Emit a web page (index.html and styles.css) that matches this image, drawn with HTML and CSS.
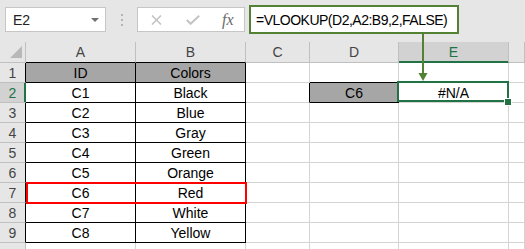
FILE: index.html
```html
<!DOCTYPE html>
<html lang="en">
  <head>
    <meta charset="UTF-8" />
    <title>VLOOKUP #N/A</title>
    <link rel="stylesheet" href="styles.css">
  </head>
  <body>
    <div class="toolbar">
      <div class="namebox"><span>E2</span><span class="caret"></span></div>
      <div class="grip"><i></i><i></i><i></i></div>
      <div class="fxbox">
        <svg class="ico-x" width="11" height="10" viewBox="0 0 11 10"><path d="M1 0.5 L10 9.5 M10 0.5 L1 9.5" stroke="#c3c3c3" stroke-width="1.6" fill="none"/></svg>
        <svg class="ico-ok" width="14" height="10" viewBox="0 0 14 10"><path d="M0.8 5 L4.6 8.8 L13.2 0.8" stroke="#c3c3c3" stroke-width="2" fill="none"/></svg>
        <span class="fx">fx</span>
      </div>
      <div class="formula">=VLOOKUP(D2,A2:B9,2,FALSE)</div>
    </div>

    <div class="sheet">
      <div class="c corner"><span class="tri"></span></div>
      <div class="c ch tbot">A</div>
      <div class="c ch tbot">B</div>
      <div class="c ch">C</div>
      <div class="c ch">D</div>
      <div class="c ch on">E</div>
      <div class="c ch"></div>

      <div class="c rh tl">1</div>
      <div class="c t th">ID</div>
      <div class="c t th">Colors</div>
      <div class="c"></div>
      <div class="c tbot"></div>
      <div class="c"></div>
      <div class="c"></div>

      <div class="c rh on">2</div>
      <div class="c t">C1</div>
      <div class="c t">Black</div>
      <div class="c tright"></div>
      <div class="c t th">C6</div>
      <div class="c sel">#N/A<span class="handle"></span></div>
      <div class="c"></div>

      <div class="c rh tl">3</div>
      <div class="c t">C2</div>
      <div class="c t">Blue</div>
      <div class="c"></div>
      <div class="c"></div>
      <div class="c"></div>
      <div class="c"></div>

      <div class="c rh tl">4</div>
      <div class="c t">C3</div>
      <div class="c t">Gray</div>
      <div class="c"></div>
      <div class="c"></div>
      <div class="c"></div>
      <div class="c"></div>

      <div class="c rh tl">5</div>
      <div class="c t">C4</div>
      <div class="c t">Green</div>
      <div class="c"></div>
      <div class="c"></div>
      <div class="c"></div>
      <div class="c"></div>

      <div class="c rh tl">6</div>
      <div class="c t">C5</div>
      <div class="c t">Orange</div>
      <div class="c"></div>
      <div class="c"></div>
      <div class="c"></div>
      <div class="c"></div>

      <div class="c rh tl">7</div>
      <div class="c t">C6</div>
      <div class="c t">Red</div>
      <div class="c"></div>
      <div class="c"></div>
      <div class="c"></div>
      <div class="c"></div>

      <div class="c rh tl">8</div>
      <div class="c t">C7</div>
      <div class="c t">White</div>
      <div class="c"></div>
      <div class="c"></div>
      <div class="c"></div>
      <div class="c"></div>

      <div class="c rh tl">9</div>
      <div class="c t">C8</div>
      <div class="c t">Yellow</div>
      <div class="c"></div>
      <div class="c"></div>
      <div class="c"></div>
      <div class="c"></div>

      <!-- row 10, only its top edge is in view -->
      <div class="c rh"></div>
      <div class="c"></div>
      <div class="c"></div>
      <div class="c"></div>
      <div class="c"></div>
      <div class="c"></div>
      <div class="c"></div>

      <!-- red box round the C6 row -->
      <div class="redbox"></div>
    </div>

    <!-- arrow from the formula bar down to E2 -->
    <svg class="arrow" width="525" height="249" viewBox="0 0 525 249">
      <path d="M423 34 V74" stroke="#548235" stroke-width="2" fill="none"/>
      <polygon points="418.5,73 427.5,73 423,81" fill="#548235"/>
    </svg>
  </body>
</html>
```

FILE: styles.css
```css
/* Excel-like sheet, formula bar on top */
body {
  margin: 0;
  width: 525px;
  height: 249px;
  overflow: hidden;
  position: relative;
  background: #e6e6e6;
  color: #000;
  font-family: "Liberation Sans", Arial, sans-serif;
  font-size: 14px;
}

/* Formula bar */
.toolbar {
  height: 42px;
  display: flex;
  align-items: flex-start;
  padding-left: 5px;
  box-sizing: border-box;
}
.namebox {
  margin-top: 7px;
  width: 101px;
  height: 25px;
  box-sizing: border-box;
  border: 1px solid #c6c6c6;
  background: #fff;
  display: flex;
  align-items: center;
  justify-content: space-between;
  padding: 0 6px 0 7px;
  color: #222;
}
.caret {
  border-left: 4px solid transparent;
  border-right: 4px solid transparent;
  border-top: 4px solid #707070;
}
.grip {
  margin: 14px 0 0 15px;
  display: flex;
  flex-direction: column;
  gap: 3px;
}
.grip i {
  width: 2px;
  height: 2px;
  background: #b4b4b4;
}
.fxbox {
  margin: 7px 0 0 14px;
  width: 108px;
  height: 25px;
  box-sizing: border-box;
  border: 1px solid #c6c6c6;
  background: #fff;
  display: flex;
  align-items: center;
}
.ico-x {
  margin-left: 13px;
}
.ico-ok {
  margin-left: 24px;
}
.fx {
  margin-left: 22px;
  font-family: "Liberation Serif", serif;
  font-style: italic;
  font-size: 16px;
  color: #6a6a6a;
}
.formula {
  margin: 5px 0 0 4px;
  width: 210px;
  height: 29px;
  box-sizing: border-box;
  border: 2px solid #548235;
  background: #fff;
  display: flex;
  align-items: center;
  padding-left: 5px;
  letter-spacing: -0.5px;
}

/* Grid */
.sheet {
  position: relative;
  display: grid;
  grid-template-columns: 26px 110px 110px 64px 89px 110px 1fr;
  grid-template-rows: 21px;
  grid-auto-rows: 20px;
  background: #fff;
}
.c {
  box-sizing: border-box;
  border-right: 1px solid #d4d4d4;
  border-bottom: 1px solid #d4d4d4;
  display: flex;
  align-items: center;
  justify-content: center;
}
.corner,
.ch,
.rh {
  background: #e6e6e6;
  color: #444;
  border-color: #c0c0c0;
}
.corner {
  align-items: flex-end;
  justify-content: flex-end;
  padding: 0 3px 4px 0;
}
.tri {
  width: 12px;
  height: 12px;
  background: #b8b8b8;
  clip-path: polygon(100% 0, 100% 100%, 0 100%);
}
.ch.on {
  background: #d2d2d2;
  color: #217346;
  border-bottom-color: #217346;
  box-shadow: inset 0 -1px #217346;
}
.rh.on {
  background: #d2d2d2;
  color: #217346;
  border-right-color: #217346;
  box-shadow: inset -1px 0 #217346;
}

/* Table borders */
.t {
  border-right-color: #000;
  border-bottom-color: #000;
}
.th {
  background: #a6a6a6;
}
.tl,
.tright {
  border-right-color: #000;
}
.tbot {
  border-bottom-color: #000;
}

/* Active cell */
.sel {
  position: relative;
  z-index: 1;
}
.sel::after {
  content: "";
  position: absolute;
  top: -2px;
  left: -2px;
  right: -1px;
  bottom: 0;
  border: 2px solid #217346;
}
.handle {
  position: absolute;
  right: -4px;
  bottom: -4px;
  width: 8px;
  height: 8px;
  box-sizing: border-box;
  background: #217346;
  border: 1px solid #fff;
  z-index: 2;
}

.redbox {
  position: absolute;
  grid-column: 2 / 4;
  grid-row: 8 / 9;
  top: -1px;
  right: -1px;
  bottom: -1px;
  left: 0;
  border: 2px solid #f00;
  z-index: 2;
}

.arrow {
  position: absolute;
  left: 0;
  top: 0;
  pointer-events: none;
}
```
